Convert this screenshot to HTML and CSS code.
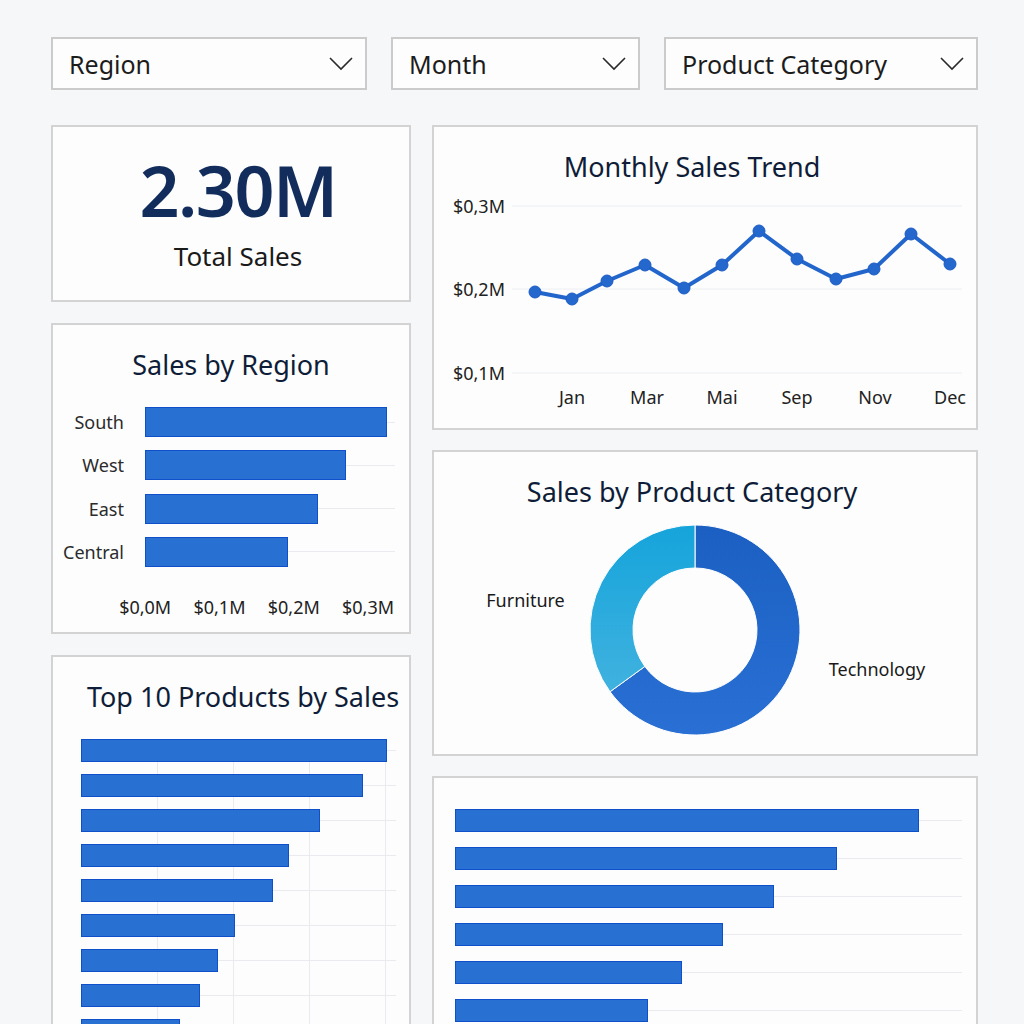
FILE: index.html
```html
<!DOCTYPE html>
<html lang="en">
<head>
<meta charset="utf-8">
<title>Sales Dashboard</title>
<link rel="stylesheet" href="styles.css">
</head>
<body>
<div class="page">
  <div class="filters">
    <div class="dropdown dd-region"><span>Region</span><svg class="chev" viewBox="0 0 24 14"><path d="M1 1 L12 12 L23 1"/></svg></div>
    <div class="dropdown dd-month"><span>Month</span><svg class="chev" viewBox="0 0 24 14"><path d="M1 1 L12 12 L23 1"/></svg></div>
    <div class="dropdown dd-cat"><span>Product Category</span><svg class="chev" viewBox="0 0 24 14"><path d="M1 1 L12 12 L23 1"/></svg></div>
  </div>

  <div class="grid">
    <div class="col">
      <section class="card kpi">
        <div class="kpi-value">2.30M</div>
        <div class="kpi-label">Total Sales</div>
      </section>

      <section class="card region">
        <h2 class="title">Sales by Region</h2>
        <div class="hbars">
          <div class="hrow"><span class="hlabel">South</span><div class="track"><div class="bar" style="width:242px"></div></div></div>
          <div class="hrow"><span class="hlabel">West</span><div class="track"><div class="bar" style="width:201px"></div></div></div>
          <div class="hrow"><span class="hlabel">East</span><div class="track"><div class="bar" style="width:173px"></div></div></div>
          <div class="hrow"><span class="hlabel">Central</span><div class="track"><div class="bar" style="width:143px"></div></div></div>
        </div>
        <div class="xaxis">
          <span>$0,0M</span><span>$0,1M</span><span>$0,2M</span><span>$0,3M</span>
        </div>
      </section>

      <section class="card top10">
        <h2 class="title title-top10">Top 10 Products by Sales</h2>
        <div class="tbars">
          <div class="track t"><div class="bar" style="width:306px"></div></div>
          <div class="track t"><div class="bar" style="width:282px"></div></div>
          <div class="track t"><div class="bar" style="width:239px"></div></div>
          <div class="track t"><div class="bar" style="width:208px"></div></div>
          <div class="track t"><div class="bar" style="width:192px"></div></div>
          <div class="track t"><div class="bar" style="width:154px"></div></div>
          <div class="track t"><div class="bar" style="width:137px"></div></div>
          <div class="track t"><div class="bar" style="width:119px"></div></div>
          <div class="track t"><div class="bar" style="width:99px"></div></div>
          <div class="track t"><div class="bar" style="width:84px"></div></div>
        </div>
      </section>
    </div>

    <div class="col col-right">
      <section class="card trend">
        <h2 class="title title-shift">Monthly Sales Trend</h2>
        <svg class="chart" viewBox="0 0 542 243" width="542" height="243">
          <g class="grid-lines">
            <line x1="78" y1="25" x2="528" y2="25"/>
            <line x1="78" y1="108" x2="528" y2="108"/>
            <line x1="78" y1="192" x2="528" y2="192"/>
          </g>
          <g class="ylab">
            <text x="71" y="25">$0,3M</text>
            <text x="71" y="108">$0,2M</text>
            <text x="71" y="192">$0,1M</text>
          </g>
          <g class="xlab">
            <text x="138" y="216">Jan</text>
            <text x="213" y="216">Mar</text>
            <text x="288" y="216">Mai</text>
            <text x="363" y="216">Sep</text>
            <text x="441" y="216">Nov</text>
            <text x="516" y="216">Dec</text>
          </g>
          <polyline class="line" points="101,111 138,118 173,100 211,84 250,107 288,84 325,50 363,78 402,98 440,88 477,53 516,83"/>
          <g class="dots">
            <circle cx="101" cy="111" r="6"/><circle cx="138" cy="118" r="6"/>
            <circle cx="173" cy="100" r="6"/><circle cx="211" cy="84" r="6"/>
            <circle cx="250" cy="107" r="6"/><circle cx="288" cy="84" r="6"/>
            <circle cx="325" cy="50" r="6"/><circle cx="363" cy="78" r="6"/>
            <circle cx="402" cy="98" r="6"/><circle cx="440" cy="88" r="6"/>
            <circle cx="477" cy="53" r="6"/><circle cx="516" cy="83" r="6"/>
          </g>
        </svg>
      </section>

      <section class="card category">
        <h2 class="title title-shift">Sales by Product Category</h2>
        <svg class="chart" viewBox="0 0 542 247" width="542" height="247">
          <defs>
            <linearGradient id="gTech" x1="0" y1="0" x2="0" y2="1">
              <stop offset="0" stop-color="#1b5fc2"/>
              <stop offset="1" stop-color="#2a70d4"/>
            </linearGradient>
            <linearGradient id="gFurn" x1="0" y1="0" x2="0" y2="1">
              <stop offset="0" stop-color="#15a4db"/>
              <stop offset="1" stop-color="#40b2df"/>
            </linearGradient>
          </defs>
          <path class="wedge" fill="url(#gTech)" d="M261 19 A105 105 0 1 1 176.05 185.72 L210.84 160.44 A62 62 0 1 0 261 62 Z"/>
          <path class="wedge" fill="url(#gFurn)" d="M176.05 185.72 A105 105 0 0 1 261 19 L261 62 A62 62 0 0 0 210.84 160.44 Z"/>
          <text class="dlab" x="91.5" y="94">Furniture</text>
          <text class="dlab" x="443" y="163">Technology</text>
        </svg>
      </section>

      <section class="card bottom">
        <div class="bbars">
          <div class="track b"><div class="bar" style="width:464px"></div></div>
          <div class="track b"><div class="bar" style="width:382px"></div></div>
          <div class="track b"><div class="bar" style="width:319px"></div></div>
          <div class="track b"><div class="bar" style="width:268px"></div></div>
          <div class="track b"><div class="bar" style="width:227px"></div></div>
          <div class="track b"><div class="bar" style="width:193px"></div></div>
        </div>
      </section>
    </div>
  </div>
</div>
</body>
</html>
```

FILE: styles.css
```css
html, body {
  margin: 0;
  padding: 0;
  height: 1024px;
  overflow: hidden;
  background: #f6f7f8;
  font-family: "Noto Sans", "Open Sans", "DejaVu Sans", sans-serif;
  color: #1a1a1a;
}

.page {
  padding: 37px 0 0 51px;
}

/* Filters */
.filters {
  display: flex;
  gap: 24px;
  height: 53px;
}

.dropdown {
  box-sizing: border-box;
  height: 53px;
  background: #fdfdfd;
  border: 2px solid #cbcbcb;
  display: flex;
  align-items: center;
  justify-content: space-between;
  padding: 1px 12px 0 16px;
  font-size: 25px;
  color: #1c1c1c;
}

.dd-region { width: 316px; }
.dd-month { width: 249px; }
.dd-cat { width: 314px; }

.chev {
  width: 24px;
  height: 14px;
  fill: none;
  stroke: #2a2a2a;
  stroke-width: 1.6;
}

/* Grid */
.grid {
  display: flex;
  gap: 21px;
  margin-top: 35px;
  align-items: flex-start;
}

.col {
  display: flex;
  flex-direction: column;
  gap: 21px;
  width: 360px;
}

.col-right {
  width: 546px;
  gap: 20px;
}

.card {
  box-sizing: border-box;
  background: #fdfdfd;
  border: 2px solid #d3d3d3;
}

.title {
  margin: 0 0 -3px 0;
  padding-top: 23px;
  font-size: 27px;
  line-height: 34px;
  font-weight: 400;
  text-align: center;
  color: #0f1d38;
  white-space: nowrap;
}

.title-shift {
  padding-right: 26px;
}

/* KPI */
.kpi {
  height: 177px;
  display: flex;
  flex-direction: column;
  align-items: center;
  padding: 28px 0 0 14px;
}

.kpi-value {
  font-size: 70px;
  line-height: 70px;
  font-weight: 600;
  color: #122c5b;
  letter-spacing: -1.5px;
}

.kpi-label {
  margin-top: 14px;
  font-size: 26px;
  line-height: 34px;
  color: #1a1a1a;
}

/* Region bars */
.region {
  height: 311px;
}

.hbars {
  margin-top: 28px;
  display: flex;
  flex-direction: column;
  gap: 13.3px;
}

.hrow {
  display: grid;
  grid-template-columns: 71px 250px;
  column-gap: 21px;
  align-items: center;
}

.hlabel {
  text-align: right;
  font-size: 18px;
  line-height: 30px;
  color: #2b2b2b;
}

.track {
  height: 30px;
  background: linear-gradient(to bottom, transparent calc(50% - 0.5px), #e9ebee calc(50% - 0.5px), #e9ebee calc(50% + 0.5px), transparent calc(50% + 0.5px));
}

.bar {
  box-sizing: border-box;
  height: 100%;
  background: #2870d2;
  border: 1px solid #0f4fca;
}

.xaxis {
  display: flex;
  margin-top: 28px;
  padding-left: 55px;
}

.xaxis span {
  width: 74.3px;
  text-align: center;
  font-size: 18px;
  line-height: 24px;
  color: #222;
  white-space: nowrap;
}

/* Top 10 */
.top10 {
  height: 420px;
}

.title-top10 {
  padding-left: 24px;
}

.tbars {
  margin: 28px 0 0 28px;
  width: 315px;
  display: flex;
  flex-direction: column;
  gap: 12px;
  background: repeating-linear-gradient(to right, transparent 0, transparent 75px, #e9ebee 75px, #e9ebee 76px);
  background-position: 1px 0;
}

.track.t {
  height: 23px;
}

/* Trend */
.trend {
  height: 305px;
}

.chart {
  display: block;
}

.grid-lines line {
  stroke: #eceef0;
  stroke-width: 1;
}

.ylab text {
  font-size: 18px;
  text-anchor: end;
  dominant-baseline: central;
  fill: #222;
}

.xlab text {
  font-size: 18px;
  text-anchor: middle;
  dominant-baseline: central;
  fill: #222;
}

.line {
  fill: none;
  stroke: #2265cb;
  stroke-width: 4;
  stroke-linejoin: round;
}

.dots circle {
  fill: #2468cd;
  stroke: #1d5cc4;
  stroke-width: 1;
}

/* Category */
.category {
  height: 306px;
}

.wedge {
  stroke: #ffffff;
  stroke-width: 1;
}

.dlab {
  font-size: 18px;
  text-anchor: middle;
  dominant-baseline: central;
  fill: #1a1a1a;
}

/* Bottom bars */
.bottom {
  height: 300px;
}

.bbars {
  margin: 31px 0 0 21px;
  width: 507px;
  display: flex;
  flex-direction: column;
  gap: 15px;
}

.track.b {
  height: 23px;
}
```
